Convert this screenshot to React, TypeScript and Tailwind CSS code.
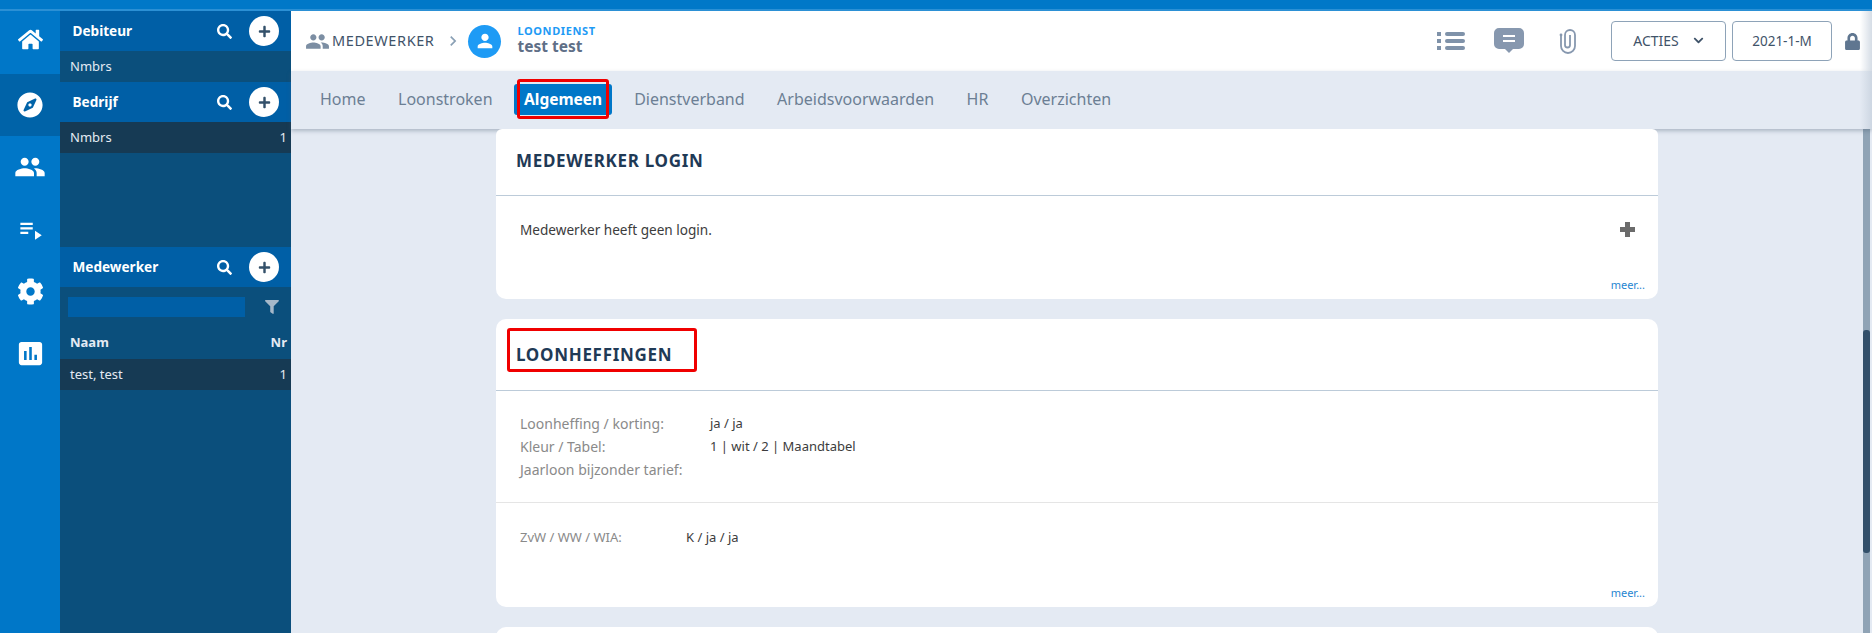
import { FaHome, FaCompass, FaCog, FaSearch, FaPlus, FaFilter, FaLock, FaChevronDown } from "react-icons/fa";
import { MdPeople, MdPlaylistPlay, MdAssessment, MdPerson, MdChevronRight } from "react-icons/md";

const font = "font-['Noto_Sans',sans-serif]";

const tabs = ["Home", "Loonstroken", "Algemeen", "Dienstverband", "Arbeidsvoorwaarden", "HR", "Overzichten"];

const PanelHeader = ({ title }: { title: string }) => (
  <div className="h-10 bg-[#005fa6] flex items-center pl-[12.5px] pr-3 shrink-0">
    <span className="text-white text-[13.6px] font-bold flex-1">{title}</span>
    <FaSearch className="text-white w-[15px] h-[15px] mr-[17px]" />
    <span className="w-[30px] h-[30px] rounded-full bg-white flex items-center justify-center">
      <FaPlus className="text-[#33506a] w-[13px] h-[13px]" />
    </span>
  </div>
);

const PanelRow = ({ name, nr, selected }: { name: string; nr?: string; selected?: boolean }) => (
  <div className={`h-[31px] flex items-center justify-between pl-[10px] pr-1 text-[13px] text-[#e4eaf3] shrink-0 ${selected ? "bg-[#163a54]" : ""}`}>
    <span>{name}</span>
    {nr && <span>{nr}</span>}
  </div>
);

const RailItem = ({ children, active, extra }: { children: React.ReactNode; active?: boolean; extra?: string }) => (
  <div className={`flex items-center justify-center text-white h-[62px] shrink-0 ${active ? "bg-[#0063a8]" : ""} ${extra ?? ""}`}>{children}</div>
);

const Meer = () => (
  <div className="absolute right-[13px] bottom-[9px] text-[11px] leading-none text-[#1f86d1]">meer...</div>
);

const Row = ({ label, value, w, small }: { label: string; value?: string; w: string; small?: boolean }) => (
  <div className="flex h-[23px] items-center">
    <span className={`${w} ${small ? "text-[13px]" : "text-[14px]"} text-[#8a8a8a] shrink-0`}>{label}</span>
    <span className="text-[13px] text-[#3c3c3c]">{value}</span>
  </div>
);

const CardTitle = ({ title, h }: { title: string; h: string }) => (
  <div className={`${h} border-b border-[#bccbd9] flex items-center pl-[20px] text-[17px] font-bold tracking-[0.7px] text-[#1f3a56] shrink-0`}>
    {title}
  </div>
);

export default function App() {
  return (
    <div className={`${font} w-[1872px] h-[633px] overflow-hidden flex flex-col bg-[#e4eaf3]`}>
      <div className="h-[9px] bg-[#0078c8] shrink-0" />
      <div className="h-[2px] bg-[#2b90d5] shrink-0" />
      <div className="flex flex-1 min-h-0">
        {/* left rail */}
        <div className="w-[60px] bg-[#0077c8] shrink-0 flex flex-col">
          <RailItem extra="h-[63px] pb-[6px]"><FaHome className="w-[25px] h-[25px]" /></RailItem>
          <RailItem active><FaCompass className="w-[26px] h-[26px]" /></RailItem>
          <RailItem><MdPeople className="w-[32px] h-[32px]" /></RailItem>
          <RailItem><MdPlaylistPlay className="w-[27px] h-[27px]" /></RailItem>
          <RailItem><FaCog className="w-[27px] h-[27px]" /></RailItem>
          <RailItem><MdAssessment className="w-[31px] h-[31px]" /></RailItem>
        </div>

        {/* lists */}
        <div className="w-[231px] bg-[#0b4f7c] shrink-0 flex flex-col">
          <PanelHeader title="Debiteur" />
          <PanelRow name="Nmbrs" />
          <PanelHeader title="Bedrijf" />
          <PanelRow name="Nmbrs" nr="1" selected />
          <div className="h-[94px] shrink-0" />
          <PanelHeader title="Medewerker" />
          <div className="h-[40px] flex items-center pl-2 pr-[12px] gap-[20px] shrink-0">
            <div className="w-[178px] h-[20px] bg-[#005fa6]" />
            <FaFilter className="text-[#a5b8c9] w-[14px] h-[14px]" />
          </div>
          <div className="h-[32px] flex items-center justify-between pl-[10px] pr-1 text-[13px] font-bold text-[#e4eaf3] shrink-0">
            <span>Naam</span>
            <span>Nr</span>
          </div>
          <PanelRow name="test, test" nr="1" selected />
        </div>

        {/* main */}
        <div className="flex-1 min-w-0 flex flex-col relative">
          <div className="h-[60px] bg-white flex items-center shrink-0 pl-[14px] pr-[12px]">
            <MdPeople className="w-[25px] h-[25px] text-[#7c8ea3]" />
            <span className="ml-[2px] text-[14.5px] tracking-[0.6px] text-[#3f5369]">MEDEWERKER</span>
            <MdChevronRight className="w-[20px] h-[20px] text-[#8aa0b5] ml-[9px]" />
            <span className="ml-[5px] w-[33px] h-[33px] rounded-full bg-[#1e9bf5] flex items-center justify-center">
              <MdPerson className="w-[22px] h-[22px] text-white" />
            </span>
            <div className="ml-[16px] flex flex-col -mt-[3px]">
              <span className="text-[11px] leading-[13px] font-bold tracking-[0.6px] text-[#1e9bf5]">LOONDIENST</span>
              <span className="text-[15.5px] leading-[18px] font-bold text-[#5f6f87]">test test</span>
            </div>
            <div className="flex-1" />
            <svg viewBox="0 0 28 22" className="w-[28px] h-[22px] text-[#7f92a9]" fill="currentColor">
              <rect x="0" y="2" width="4" height="4" />
              <rect x="0" y="9" width="4" height="4" />
              <rect x="0" y="16" width="4" height="4" />
              <rect x="8" y="2" width="20" height="4" rx="2" />
              <rect x="8" y="9" width="20" height="4" rx="2" />
              <rect x="8" y="16" width="20" height="4" rx="2" />
            </svg>
            <svg viewBox="0 0 30 26" className="w-[30px] h-[26px] ml-[29px] text-[#8798af]" fill="currentColor">
              <path d="M5 0h20a5 5 0 0 1 5 5v11a5 5 0 0 1-5 5h-6l-4 4-4-4H5a5 5 0 0 1-5-5V5a5 5 0 0 1 5-5z" />
              <rect x="9" y="7" width="12" height="2" fill="#fff" />
              <rect x="9" y="12" width="12" height="2" fill="#fff" />
            </svg>
            <svg viewBox="0 0 18 26" className="w-[18px] h-[26px] ml-[35px] text-[#8798af]" fill="none" stroke="currentColor" strokeWidth="1.8">
              <circle cx="2" cy="7" r="1.4" fill="currentColor" stroke="none" />
              <path d="M2 7v11a7 7 0 0 0 14 0V7a5 5 0 0 0-10 0v10a2.5 2.5 0 0 0 5 0V7" />
            </svg>
            <button className="ml-[34px] w-[115px] h-[40px] border border-[#8ea3b8] rounded-[4px] flex items-center justify-center gap-[14px] text-[14px] pb-[1px] text-[#3f5369]">
              ACTIES
              <FaChevronDown className="w-[11px] h-[11px]" />
            </button>
            <button className="ml-[6px] w-[100px] h-[40px] border border-[#8ea3b8] rounded-[4px] text-[13.5px] text-[#3f5369]">2021-1-M</button>
            <FaLock className="ml-[13px] w-[15px] h-[17px] text-[#5f7690]" />
          </div>

          <div className="h-[58px] bg-[#e4eaf3] flex items-center pl-[21px] pb-[2px] shrink-0 shadow-[0_2px_4px_rgba(70,90,110,0.35)] z-10">
            {tabs.map((t) => (
              <span
                key={t}
                className={
                  t === "Algemeen"
                    ? "mr-[14px] -ml-[3px] text-[15.5px] leading-[31px] px-[10px] rounded-[3px] bg-[#0077c8] text-white font-bold"
                    : "mr-[16.5px] text-[16px] leading-[31px] px-[8px] text-[#6c7f94]"
                }
              >
                {t}
              </span>
            ))}
          </div>

          <div className="flex-1 min-h-0 overflow-hidden flex flex-col pl-[205px] gap-[20px] relative z-20">
            <div className="w-[1162px] h-[170px] bg-white rounded-t-[6px] rounded-b-[10px] shrink-0 relative flex flex-col">
              <CardTitle title="MEDEWERKER LOGIN" h="h-[67px] pb-[2px]" />
              <div className="pl-[24px] pt-[24px] text-[13.6px] text-[#3c3c3c]">Medewerker heeft geen login.</div>
              <svg viewBox="0 0 15 15" className="absolute right-[23px] top-[93px] w-[15px] h-[15px] text-[#6b6b6b]" fill="currentColor">
                <path d="M5 0h5v5h5v5h-5v5H5v-5H0V5h5z" />
              </svg>
              <Meer />
            </div>

            <div className="w-[1162px] h-[288px] bg-white rounded-[10px] shrink-0 relative flex flex-col">
              <CardTitle title="LOONHEFFINGEN" h="h-[72px]" />
              <div className="h-[112px] border-b border-[#e5e5e5] pl-[24px] pt-[21px] shrink-0">
                <Row label="Loonheffing / korting:" value="ja / ja" w="w-[190px]" />
                <Row label="Kleur / Tabel:" value="1 | wit / 2 | Maandtabel" w="w-[190px]" />
                <Row label="Jaarloon bijzonder tarief:" w="w-[190px]" />
              </div>
              <div className="pl-[24px] pt-[23px]">
                <Row label="ZvW / WW / WIA:" value="K / ja / ja" w="w-[166px]" small />
              </div>
              <Meer />
            </div>

            <div className="w-[1162px] h-[80px] bg-white rounded-t-[10px] shrink-0" />
          </div>

          {/* annotation boxes */}
          <div className="absolute left-[226px] top-[68px] w-[92px] h-[40px] border-[3px] border-[#f00000] rounded-[3px] z-30" />
          <div className="absolute left-[216px] top-[317px] w-[190px] h-[44px] border-[3px] border-[#f00000] rounded-[3px] z-30" />

          {/* fade at the right of the header */}
          <div className="absolute right-0 top-0 h-[118px] w-[12px] bg-gradient-to-r from-transparent to-[#c3cedb]/70 z-30" />

          {/* scrollbar */}
          <div className="absolute right-[2px] top-[118px] bottom-0 w-[7px] bg-[#8fa3b5] z-0">
            <div className="absolute left-0 right-0 top-[201px] h-[223px] rounded-[3px] bg-[#33506a]" />
          </div>
        </div>
      </div>
    </div>
  );
}
